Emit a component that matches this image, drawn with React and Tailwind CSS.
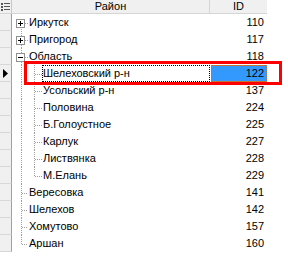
import React from "react";

const rows = [
  { name: "Иркутск", id: 110, level: 0, box: "+" },
  { name: "Пригород", id: 117, level: 0, box: "+" },
  { name: "Область", id: 118, level: 0, box: "-" },
  { name: "Шелеховский р-н", id: 122, level: 1, selected: true },
  { name: "Усольский р-н", id: 137, level: 1 },
  { name: "Половина", id: 224, level: 1 },
  { name: "Б.Голоустное", id: 225, level: 1 },
  { name: "Карлук", id: 227, level: 1 },
  { name: "Листвянка", id: 228, level: 1 },
  { name: "М.Елань", id: 229, level: 1, lastChild: true },
  { name: "Вересовка", id: 141, level: 0 },
  { name: "Шелехов", id: 142, level: 0 },
  { name: "Хомутово", id: 157, level: 0 },
  { name: "Аршан", id: 160, level: 0, last: true },
];

const dot = { stroke: "#a0a0a0", strokeWidth: 1, strokeDasharray: "1 1", shapeRendering: "crispEdges" };

// dotted tree connectors + expand box for one row
function Gutter({ row, first }) {
  const w = row.level === 0 ? 16 : 30;
  return (
    <svg width={w} height="17" className="shrink-0">
      <line x1="9.5" y1={first ? 9 : 0} x2="9.5" y2={row.last ? 10 : 17} style={dot} />
      {row.level === 0 && !row.box && <line x1="10" y1="9.5" x2="16" y2="9.5" style={dot} />}
      {row.level === 1 && (
        <>
          <line x1="22.5" y1="0" x2="22.5" y2={row.lastChild ? 10 : 17} style={dot} />
          <line x1="23" y1="9.5" x2="30" y2="9.5" style={dot} />
        </>
      )}
      {row.box && (
        <>
          <line x1="13" y1="9.5" x2="16" y2="9.5" style={dot} />
          <rect x="4.5" y="5.5" width="8" height="8" fill="#fff" stroke="#919191" shapeRendering="crispEdges" />
          <line x1="6" y1="9.5" x2="11" y2="9.5" stroke="#000" shapeRendering="crispEdges" />
          {row.box === "+" && <line x1="8.5" y1="7" x2="8.5" y2="12" stroke="#000" shapeRendering="crispEdges" />}
        </>
      )}
    </svg>
  );
}

export default function App() {
  return (
    <div className="relative w-[288px] h-[260px] bg-white text-[11px] text-black" style={{ fontFamily: "'Liberation Sans', Arial, sans-serif" }}>
      <div className="w-[267px]">
        {/* header */}
        <div className="flex h-[14px] bg-[#f0f0f0] border-b border-[#d5d5d5] leading-[13px]">
          <div className="w-[12px] flex items-center justify-center border-r border-[#c8c8c8]">
            <svg width="9" height="10">
              <g fill="#555" shapeRendering="crispEdges">
                <rect x="0" y="1" width="2" height="2" />
                <rect x="0" y="4" width="2" height="2" />
                <rect x="0" y="7" width="2" height="2" />
                <rect x="3" y="1" width="6" height="1" />
                <rect x="3" y="4" width="6" height="1" />
                <rect x="3" y="7" width="6" height="1" />
              </g>
            </svg>
          </div>
          <div className="w-[198px] text-center border-r border-[#d5d5d5]">Район</div>
          <div className="flex-1 text-center">ID</div>
        </div>

        {/* rows */}
        {rows.map((row, i) => (
          <div key={row.name} className="flex h-[17px] leading-[17px]">
            <div className="w-[12px] bg-[#f0f0f0] border-r border-[#a0a0a0] border-b border-b-[#d8d8d8] flex items-center justify-center">
              {row.selected && (
                <svg width="5" height="9">
                  <path d="M0 0 L5 4.5 L0 9 Z" fill="#000" />
                </svg>
              )}
            </div>
            <div className="w-[198px] flex">
              <Gutter row={row} first={i === 0} />
              <div className={`flex-1 overflow-hidden border border-dotted ${row.selected ? "border-black" : "border-transparent"}`}>
                <div className="-mt-px">{row.name}</div>
              </div>
            </div>
            <div className="w-[57px] pl-px">
              <div className={`h-full overflow-hidden text-right pr-[2px] border border-dotted ${row.selected ? "bg-[#3399ff] border-[#c07030]" : "border-transparent"}`}>
                <div className="-mt-px">{row.id}</div>
              </div>
            </div>
          </div>
        ))}
      </div>

      {/* red highlight annotation */}
      <div className="absolute left-[24px] top-[61px] w-[258px] h-[24px] border-[3px] border-[#ff0000]" />
    </div>
  );
}
